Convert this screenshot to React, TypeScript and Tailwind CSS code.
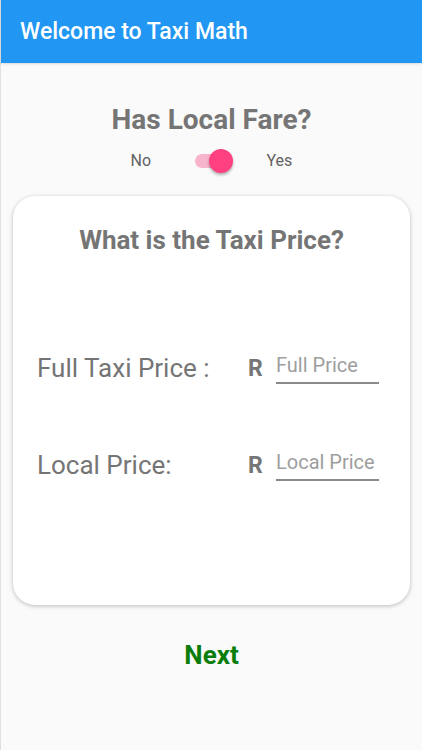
import { useState } from 'react';

const font = { fontFamily: 'Roboto, "Noto Sans", sans-serif' };

function PriceRow({ label, placeholder }: { label: string; placeholder: string }) {
  return (
    <div className="flex items-center h-[40px]">
      <div className="w-[211px] text-[26px] text-[#757575] leading-none">{label}</div>
      <div className="w-[28px] text-[23px] font-bold text-[#757575] leading-none">R</div>
      <div className="w-[103px] border-b-2 border-[#8a8a8a] pb-[3px]">
        <input
          placeholder={placeholder}
          className="w-full bg-transparent outline-none text-[20px] leading-none text-[#757575] placeholder:text-[#9e9e9e]"
          style={font}
        />
      </div>
    </div>
  );
}

export default function App() {
  const [hasLocal, setHasLocal] = useState(true);

  return (
    <div className="w-[422px] h-[750px] bg-[#fafafa] flex flex-col border-l border-[#e0e0e0]" style={font}>
      <header className="h-[63px] bg-[#2196f3] flex items-center px-[19px] shadow-sm">
        <h1 className="text-[23px] text-white font-medium leading-none">Welcome to Taxi Math</h1>
      </header>

      <div className="flex flex-col items-center pt-[43px]">
        <h2 className="text-[28px] font-bold text-[#757575] leading-none">Has Local Fare?</h2>
        <div className="flex items-center mt-[15px] h-[24px]">
          <span className="text-[16px] text-[#616161] w-[64px] text-left">No</span>
          <button
            onClick={() => setHasLocal(!hasLocal)}
            className="relative w-[38px] h-[24px] mr-[34px] flex items-center"
            aria-label="Has local fare"
          >
            <span className={`block w-[34px] h-[14px] rounded-full ${hasLocal ? 'bg-[#f8b4cc]' : 'bg-[#bdbdbd]'}`} />
            <span
              className={`absolute top-0 w-[24px] h-[24px] rounded-full shadow-[0_2px_3px_rgba(0,0,0,0.3)] ${hasLocal ? 'left-[14px] bg-[#ff4081]' : 'left-[-4px] bg-[#fafafa]'}`}
            />
          </button>
          <span className="text-[16px] text-[#616161] w-[26px] text-left">Yes</span>
        </div>
      </div>

      <div className="mx-[12px] mt-[23px] h-[409px] bg-white rounded-[22px] shadow-[0_1px_4px_rgba(0,0,0,0.25)] flex flex-col">
        <h3 className="text-[26px] font-bold text-[#757575] text-center mt-[31px] leading-none">What is the Taxi Price?</h3>
        <div className="flex flex-col pl-[24px] mt-[95px] gap-[57px]">
          <PriceRow label="Full Taxi Price :" placeholder="Full Price" />
          <PriceRow label="Local Price:" placeholder="Local Price" />
        </div>
      </div>

      <div className="flex justify-center mt-[37px]">
        <button className="text-[26px] font-bold text-[#0b7d0b] leading-none">Next</button>
      </div>
    </div>
  );
}
